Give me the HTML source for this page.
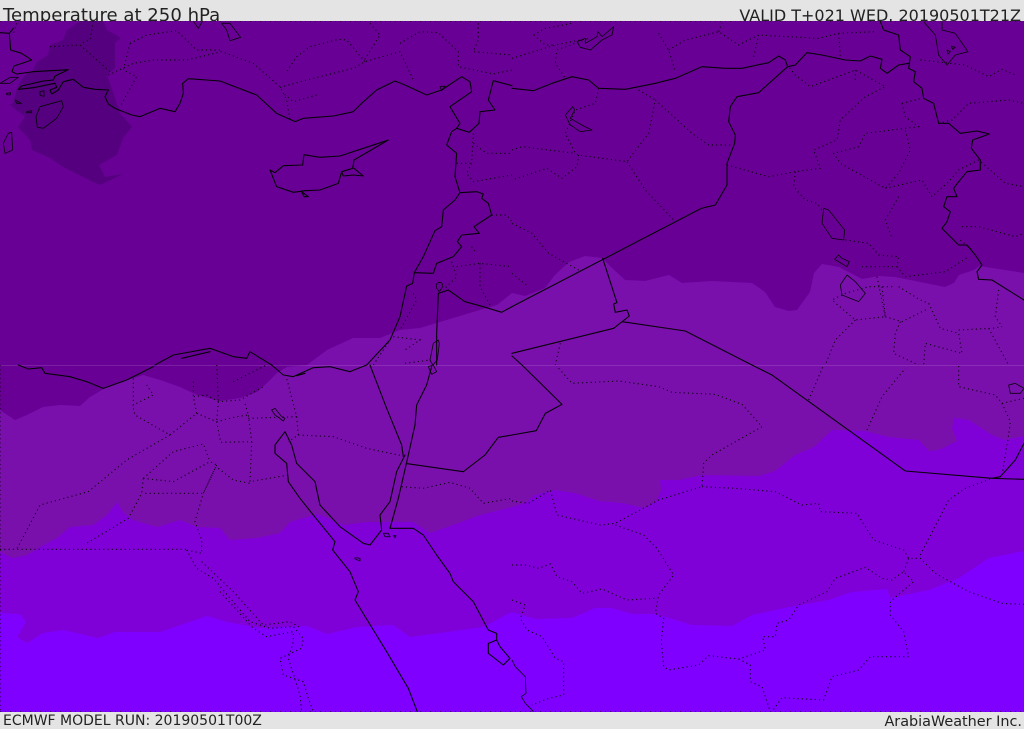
<!DOCTYPE html>
<html><head><meta charset="utf-8"><title>Temperature at 250 hPa</title>
<style>
html,body{margin:0;padding:0;background:#e4e4e4;width:1024px;height:729px;overflow:hidden}
svg{display:block}
text{font-family:"DejaVu Sans","Liberation Sans",sans-serif;fill:#222}
.s{fill:none;stroke:#000;stroke-width:3.3;stroke-linejoin:round;stroke-linecap:round;opacity:.95}
.t{fill:none;stroke:#000;stroke-width:2.5;stroke-linejoin:round;opacity:.9}
.d{fill:none;stroke:#000;stroke-width:3.4;stroke-dasharray:3.4 9.5;opacity:.9}
</style></head><body>
<svg width="1024" height="729" viewBox="0 0 1024 729" xmlns="http://www.w3.org/2000/svg">
<rect width="1024" height="729" fill="#e4e4e4"/>
<text x="3" y="21" font-size="18.1">Temperature at 250 hPa</text>
<text x="1021" y="21" font-size="16" text-anchor="end">VALID T+021 WED. 20190501T21Z</text>

<rect x="0" y="21" width="1024" height="691" fill="#690096"/>
<path fill="#55007f" d="M80,21 L67,30 L63,40 L50,45 L48,55 L37,62 L33,70 L23,77 L17,88 L13,103 L10,105 L25,117 L18,127 L30,140 L32,150 L50,158 L63,167 L93,182 L100,185 L123,174 L105,177 L99,165 L117,155 L123,138 L132,127 L120,113 L107,75 L115,68 L115,43 L121,38 L107,30 L103,21Z"/>
<path fill="#7a10ac" d="M0,410 L15,420 L27,415 L43,407 L60,405 L80,406 L90,397 L107,387 L127,380 L143,375 L160,380 L180,387 L197,395 L220,401 L240,398 L257,392 L267,383 L277,373 L287,367 L307,365 L327,350 L353,338 L380,338 L400,330 L420,328 L440,322 L473,312 L497,305 L512,293 L525,296 L545,288 L555,275 L569,262 L585,256 L602,258 L612,268 L625,280 L645,281 L669,275 L682,283 L712,281 L752,283 L765,292 L775,307 L789,311 L797,310 L810,292 L814,273 L822,264 L839,267 L862,279 L879,276 L895,277 L945,287 L954,283 L959,275 L974,270 L979,266 L1024,273 L1024,712 L0,712Z"/>
<path fill="#8000d8" d="M0,552 L13,558 L27,555 L40,547 L57,538 L70,527 L93,525 L107,515 L117,502 L123,512 L133,520 L157,527 L180,520 L197,527 L220,528 L230,540 L257,538 L280,533 L290,522 L317,514 L328,518 L343,525 L367,522 L393,522 L413,522 L430,533 L453,525 L480,515 L512,507 L525,503 L535,495 L555,490 L575,493 L599,501 L622,503 L645,508 L657,500 L661,490 L660,480 L679,480 L702,475 L759,476 L775,471 L795,455 L814,447 L832,430 L865,431 L889,437 L919,440 L929,451 L939,450 L957,441 L952,428 L954,418 L969,420 L992,435 L1005,440 L1024,436 L1024,712 L0,712Z"/>
<path fill="#7f00ff" d="M0,613 L20,614 L26,622 L17,637 L27,643 L43,633 L63,630 L98,638 L115,632 L160,632 L207,616 L227,622 L260,628 L307,626 L327,634 L357,627 L393,625 L410,637 L447,632 L483,627 L512,612 L535,619 L572,618 L595,608 L612,608 L632,614 L655,614 L692,625 L732,626 L752,615 L789,607 L829,600 L852,592 L887,589 L890,598 L929,590 L959,578 L989,558 L1024,551 L1024,712 L0,712Z"/>
<rect x="0" y="365" width="1024" height="1" fill="#fff" opacity=".12"/>

<!-- top-left quadrant -->
<g transform="scale(.33333)">
<path class="s" d="M0,98 L28,100 L40,85 M28,100 L32,150 L65,160 L95,180 L60,192 L42,198 L36,215 L50,222 L100,215 L205,209 L165,228 L160,240 L130,243 L65,258 L55,268 L100,263 L165,250 L170,262 L150,270 L155,282 L175,270 L190,245 L220,238 L250,262 L285,268 L325,270 L315,290 L325,312 L345,325 L395,345 L420,350 L480,325 L525,335 L540,310 L550,280 L548,250 L565,236 L660,243 L770,285 L830,340 L885,365 L910,355 L1000,348 L1060,335 L1085,310 L1130,270 L1185,243 L1215,255 L1280,285 L1325,270 L1385,230 L1410,245 L1415,275 L1350,320 L1380,370 L1370,385 L1355,395 L1340,435 L1370,460 L1365,530 L1380,578 L1365,600 L1330,630 L1325,680 L1305,692 L1270,770 L1243,818 L1238,850 L1220,858 L1200,950 L1170,1020 L1100,1095"/>
<path class="s" d="M1243,818 L1300,820 L1310,790 L1360,770 L1385,740 L1372,725 L1385,705 L1438,700 L1422,680 L1475,645 L1465,610 L1445,595 L1450,582 L1430,575 L1380,578"/>
<path class="s" d="M1370,385 L1408,397 L1437,370 L1440,335 L1485,330 L1465,300 L1480,242 L1536,257"/>
<path class="s" d="M1315,880 L1345,870 L1395,905 L1450,920 L1505,937 L1536,920 M1315,880 L1310,1000 L1310,1095"/>
<path class="t" d="M1318,847 Q1305,850 1310,865 L1318,875 L1328,860 Q1330,848 1318,847Z M1315,1020 L1300,1030 L1290,1080 L1298,1095 L1312,1080 L1318,1030Z"/>
<path class="s" d="M1165,420 L1090,445 L1020,468 L960,472 L912,464 L908,495 L850,497 L825,518 L810,510 L830,560 L880,577 L915,572 L960,570 L1015,550 L1025,515 L1058,505 L1062,480 L1165,420Z M1062,505 L1090,528 L1060,525 L1030,528 L1025,515 M905,575 L925,590 L912,590Z"/>
<path class="t" d="M665,70 L690,70 L722,112 L690,122 L680,90Z M580,63 L595,85 L608,63 M0,250 L30,232 L55,232 L30,250Z M20,280 L32,278 L30,285 L20,284Z M120,275 L132,272 L132,290 L120,285Z M108,350 L120,320 L185,302 L190,320 L170,355 L130,385 L112,382Z M25,400 L35,397 L38,450 L15,460 L10,430Z M80,335 L95,332 L95,338 L80,338Z M45,300 L65,310 L50,310Z M1320,260 L1335,258 L1325,272Z"/>
<path class="s" d="M815,1095 L750,1055 L740,1075 L700,1070 L630,1045 L520,1065 L465,1095 M545,1075 L630,1055"/>
<path class="d" d="M325,225 L400,190 L460,180 L560,180 L665,155 L760,190 L840,260 L860,300 L870,360 M840,262 L920,240 L1060,205 L1095,185 L1200,155 L1240,240 M1095,185 L1040,120 L1015,118 L930,140 L890,170 L860,215 M950,285 L880,305 L850,280 M150,140 L240,135 L330,215 M280,63 L270,120 L240,130 M390,130 L440,105 L530,92 L590,150 L665,150 M390,130 L370,210 L410,230 L360,320 M1200,130 L1260,95 L1315,98 L1375,155 L1375,200 L1480,222 L1536,210 M1435,70 L1435,120 L1420,155 L1536,165 M1110,70 L1140,105 L1090,185 M50,70 L40,100 M1420,400 L1415,490 L1400,520 L1420,545 L1536,525 M1420,430 L1460,460 L1536,460 M1370,490 L1415,490 M1475,645 L1520,645 L1536,665 M1355,785 L1370,830 L1330,870 M1370,800 L1440,790 L1536,800 M1440,790 L1440,860 L1470,915 M1240,880 L1250,900 L1200,990 M1180,1010 L1260,1020 L1215,1050 M1415,740 L1430,760"/>
<path class="d" d="M1120,1095 L1170,1020 M1215,1090 L1290,1080"/>
</g>

<!-- top-right quadrant -->
<g transform="translate(512,0) scale(.33333)">
<path class="s" d="M0,265 L65,272 L120,250 L180,230 L230,240 L260,265 L340,268 L430,250 L490,235 L570,200 L640,205 L690,205 L770,188 L800,168 L820,180 L827,200 L850,195 L885,158 L930,165 L1000,180 L1045,183 L1075,168 L1110,178 L1105,205 L1125,220 L1160,195 L1190,190"/>
<path class="s" d="M1105,65 L1115,90 L1160,105 L1165,150 L1195,170 L1190,205 L1210,215 L1205,245 L1230,265 L1235,295 L1265,310 L1280,370 L1310,370 L1345,400 L1395,393 L1432,402 L1382,420 L1378,445 L1405,480 L1405,510 L1365,515 L1340,545 L1325,565 L1335,590 L1305,590 L1295,620 L1315,635 L1305,665 L1290,685 L1340,735 L1365,735 L1390,765 L1410,795 L1395,815 L1400,838 L1440,840 L1536,900"/>
<path class="s" d="M827,200 L740,278 L675,290 L655,320 L650,365 L670,405 L668,430 L645,490 L645,555 L610,615 L568,625 L0,920"/>
<path class="s" d="M272,775 L315,908 L305,912 L310,937 L345,930 L352,948 L305,985 L0,1060 M330,965 L520,993 L720,1095 M0,1068 L30,1095"/>
<path class="t" d="M195,125 L220,115 L220,130 L255,110 L258,95 L270,110 L305,80 L300,105 L270,120 L235,150 L205,142Z M182,320 L160,345 L175,375 L205,395 L240,390 L215,378 L175,355 L188,330Z M935,625 L930,670 L960,715 L995,720 L998,690 L950,630Z M980,765 L968,778 L1005,800 L1012,785 L990,775Z M1005,825 L985,855 L990,885 L1040,905 L1060,880 L1030,845Z"/>
<path class="t" d="M1235,65 L1270,105 L1280,165 L1305,195 L1330,165 L1368,155 L1330,100 L1290,90 L1290,65 M1305,150 L1315,155 L1308,162Z M1318,138 L1330,142 L1322,148Z"/>
<path class="d" d="M0,175 L130,135 L230,115 L135,150 L130,190 L160,235 M65,105 L100,85 L180,70 M65,105 L100,135 L130,135 M440,100 L470,150 L490,215 M470,150 L520,120 L620,95 L680,135 L740,105 L920,115 L980,100 L1090,95 M620,95 L630,70 M725,170 L740,105 M980,100 L985,170 M260,265 L250,310 L190,330 L160,400 L190,460 L200,465 L345,485 L410,400 L430,300 L540,400 L590,435 L665,435 M380,270 L430,300 M200,465 L195,500 L150,535 L105,505 L0,540 M0,450 L30,440 L190,460 M345,485 L400,570 L490,665 M0,670 L60,700 L110,760 L200,810 M0,820 L50,860 M645,495 L770,530 L850,515 L925,505 L905,450 L975,420 L985,360 L1060,290 L1120,260 L1030,210 L950,240 L895,260 L850,225 L830,200 M1030,210 L1030,240 M850,515 L845,560 L880,600 L915,610 L930,630 M1170,310 L1230,295 M1170,310 L1180,350 L1220,380 L1060,400 L1040,440 L965,460 L985,490 L1120,565 L1160,520 L1195,450 L1180,390 M1120,565 L1230,540 L1260,590 L1310,545 L1340,510 L1400,480 L1480,550 L1536,560 M1160,590 L1120,660 L1140,715 M1000,720 L1070,730 L1100,765 L1160,770 L1155,800 L1050,800 M1155,800 L1180,830 L1300,815 L1370,770 M1350,680 L1400,680 L1510,710 L1536,700 M1345,720 L1380,750 M1280,370 L1320,360 L1370,310 L1490,300 L1536,310 M1225,180 L1360,195 L1430,230 L1470,208 L1510,225 M1160,860 L1225,900 L1250,910 L1285,985 L1340,1000 L1350,1060 L1240,1030 L1235,1095 M1110,860 L1120,950 L1170,965 L1250,925 M1095,830 L1120,950 L1030,960 L960,900 L1000,880 L1070,860 L1150,860 M1030,960 L970,1020 L940,1095 M1165,965 L1150,1000 L1145,1060 L1220,1095 M1340,990 L1440,985 L1470,980 M1430,985 L1490,1095 M1460,870 L1450,950 L1470,980 M145,1030 L130,1095"/>
</g>

<!-- bottom-left quadrant -->
<g transform="translate(0,365) scale(.33333)">
<path class="s" d="M1100,0 L1050,20 L990,5 L940,8 L880,35 L850,30 L815,0 M460,5 L380,45 L310,70 L260,50 L210,35 L135,25 L125,8 L85,12 L55,0 M890,32 L915,25 M1110,0 L1160,130 L1205,240 L1210,275"/>
<path class="s" d="M1295,5 L1280,60 L1250,120 L1245,180 L1225,270 L1195,400 L1170,490 M1215,270 L1190,320 L1170,410 L1140,450 L1145,495 L1110,540 L1090,535 L1020,485 L960,420 L945,350 L890,295 L875,240 L855,200 L825,240 L825,265 L860,295 L865,350 L900,400 L940,450 L1005,530 L998,555 L1050,620 L1075,680 L1065,705 L1160,860 L1225,970 L1252,1040"/>
<path class="s" d="M1170,490 L1240,490 L1270,510 L1310,570 L1350,625 L1360,650 L1420,710 L1465,795 L1490,805 L1490,825 L1465,835 L1465,865 L1510,900 L1530,880 L1500,845 L1490,825 M1222,296 L1390,320 L1455,270 L1495,217 L1536,210"/>
<path class="t" d="M815,135 L825,130 L845,155 L855,160 L850,168 L825,150Z M1150,505 L1165,505 L1170,515 L1155,515Z M1180,512 L1188,512 L1185,518Z M1065,578 L1080,580 L1080,588 L1065,582Z M1285,5 L1300,0 L1310,20 L1295,28Z"/>
<path class="d" d="M400,40 L400,120 L460,90 L440,60 M400,130 L405,150 L510,210 L590,145 L580,95 L620,90 L655,110 L720,105 L790,65 M590,145 L650,170 L710,155 L745,150 L735,115 M650,170 L662,232 L755,230 L745,150 M755,230 L750,350 L865,330 M745,160 L890,155 L860,40 M890,155 L895,210 L865,230 M895,210 L1000,215 L1100,250 L1205,272 M510,210 L380,285 L265,380 L120,420 L50,553 M655,110 L650,170 M580,50 L580,95 M650,0 L655,110 M700,50 L800,0 M430,340 L520,350 L630,290 L650,300 L610,385 L430,385 M430,340 L520,260 L610,237 L628,285 M430,340 L425,385 L385,460 L260,535 M655,310 L700,345 L750,355 M650,300 L610,385 L585,470 L605,525 L605,565 L560,555 M0,553 L560,553 M560,555 L590,610 L640,640 L750,770 L810,790 L880,785 L910,820 L905,850 L840,880 L850,930 L910,950 L925,1000 L940,1040 M605,590 L700,680 L790,780 L870,770 L905,790 M660,680 L760,790 L800,815 L880,800 L880,830 L865,880 L900,990 L905,1040 M1205,365 L1270,370 L1350,352 L1410,370 L1450,415 L1536,400 M0,0 L0,1040"/>
</g>

<!-- bottom-right quadrant -->
<g transform="translate(512,365) scale(.33333)">
<path class="s" d="M720,0 L780,30 L1180,318 L1440,340 L1536,343 M1440,340 L1465,335 L1510,285 L1536,235 M30,0 L150,118 L100,145 L73,197 L0,210"/>
<path class="t" d="M0,885 L10,905 L40,935 L42,985 L28,995 L40,1015 L65,1040 M1490,60 L1510,55 L1536,70 L1525,85 L1495,85Z"/>
<path class="d" d="M140,10 L180,55 L320,48 L440,65 L480,82 L610,88 L690,118 L750,185 L600,270 L575,295 L570,365 L440,405 L310,475 L265,480 L135,450 L115,375 L50,415 L0,408 M310,480 L395,510 L435,550 L485,630 L440,690 L430,745 L455,760 L448,830 L455,905 L470,915 L560,900 L590,872 L680,882 L760,855 L752,815 L790,815 L795,775 L830,765 L860,720 L945,680 L970,640 L1060,607 L1110,640 L1140,645 L1175,620 L1205,650 L1135,710 L1135,750 L1175,800 L1190,875 L1075,875 L1040,915 L960,935 L935,1005 L810,998 L780,1040 M680,882 L715,900 L715,950 L750,965 L775,1040 M570,365 L670,370 L790,380 L870,420 L920,415 L925,440 L1035,445 L1085,525 L1175,555 L1190,580 L1225,580 L1270,625 L1370,680 L1470,715 L1536,718 M1190,580 L1175,620 M1225,570 L1310,405 L1360,370 L1440,340 M1470,330 L1490,210 L1495,170 L1470,115 L1450,90 L1340,65 L1340,0 M1470,115 L1536,100 M1065,195 L1110,95 L1180,10 M890,105 L935,0 M0,600 L40,600 L80,610 L115,597 L135,635 L180,650 L210,685 L270,672 L345,705 L430,700 M0,705 L40,720 L25,760 L45,795 L90,815 L130,880 L155,890 L155,990 L110,1000 L60,1020"/>
</g>

<line x1="0" y1="21.5" x2="1024" y2="21.5" stroke="#000" stroke-width="1" stroke-dasharray="1 4" opacity=".5"/>
<line x1="0" y1="711.5" x2="1024" y2="711.5" stroke="#000" stroke-width="1" stroke-dasharray="1 4" opacity=".5"/>
<rect x="0" y="712" width="1024" height="17" fill="#e4e4e4"/>
<text x="3" y="725" font-size="14">ECMWF MODEL RUN: 20190501T00Z</text>
<text x="1022" y="726" font-size="14.4" text-anchor="end">ArabiaWeather Inc.</text>
</svg>
</body></html>
